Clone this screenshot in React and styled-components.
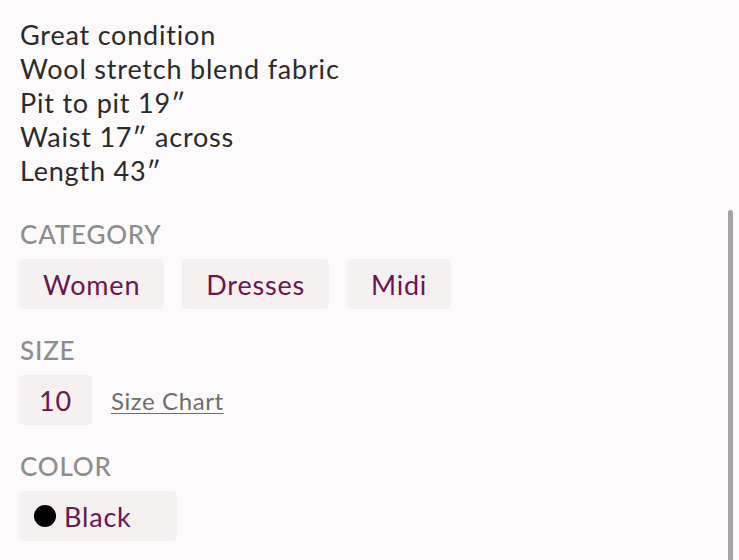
import React from 'react'
import styled, { createGlobalStyle } from 'styled-components';

const GlobalStyle = createGlobalStyle`
  html, body {
    margin: 0;
    padding: 0;
    background: #fcfafb;
  }
  body {
    font-family: Lato, "Noto Sans", sans-serif;
  }
`;

const details = [
  'Great condition',
  'Wool stretch blend fabric',
  'Pit to pit 19\u2033',
  'Waist 17\u2033 across',
  'Length 43\u2033',
];

const categories = ['Women', 'Dresses', 'Midi'];

const App = () => {
  return (
    <>
      <GlobalStyle />
      <StyledPage>
        <StyledDescription>
          {details.map((line) => <StyledLine key={line}>{line}</StyledLine>)}
        </StyledDescription>

        <StyledSection>
          <StyledLabel>Category</StyledLabel>
          <StyledChipRow>
            {categories.map((c) => <StyledChip key={c}>{c}</StyledChip>)}
          </StyledChipRow>
        </StyledSection>

        <StyledSection>
          <StyledLabel>Size</StyledLabel>
          <StyledChipRow>
            <StyledChip padLeft="20px" padRight="20px">10</StyledChip>
            <StyledLink href="#">Size Chart</StyledLink>
          </StyledChipRow>
        </StyledSection>

        <StyledSection>
          <StyledLabel>Color</StyledLabel>
          <StyledChipRow>
            <StyledChip padLeft="15px" padRight="45px">
              <StyledDot />
              Black
            </StyledChip>
          </StyledChipRow>
        </StyledSection>

        <StyledScrollThumb />
      </StyledPage>
    </>
  )
}

const StyledPage = styled.main`
  position: relative;
  height: 560px;
  overflow: hidden;
  padding: 18px 20px 0 20px;
  box-sizing: border-box;
`;

const StyledDescription = styled.div`
  color: #2b2a2a;
  font-size: 27px;
  line-height: 34px;
  letter-spacing: 0.8px;
  margin-bottom: 31px;
`;

const StyledLine = styled.div``;

const StyledSection = styled.section`
  & + & { margin-top: 26px; }
`;

const StyledLabel = styled.div`
  color: #8d8d8d;
  font-size: 26px;
  line-height: 30px;
  text-transform: uppercase;
  font-weight: 500;
  letter-spacing: 0.8px;
  margin-bottom: 10px;
`;

const StyledChipRow = styled.div`
  display: flex;
  align-items: center;
  gap: 19px;
`;

const StyledChip = styled.div`
  display: flex;
  align-items: center;
  gap: 8px;
  height: 50px;
  box-sizing: border-box;
  padding: 0 ${(props) => props.padRight || '24px'} 0 ${(props) => props.padLeft || '24px'};
  margin-left: -1px;
  background: #f4f1f0;
  border-radius: 5px;
  color: #6a1650;
  font-size: 27px;
  letter-spacing: 0.8px;
`;

const StyledDot = styled.span`
  width: 22px;
  height: 22px;
  border-radius: 50%;
  background: #000;
  flex-shrink: 0;
`;

const StyledLink = styled.a`
  color: #6d6d6d;
  font-size: 24px;
  letter-spacing: 0.6px;
  text-decoration: underline;
  text-underline-offset: 3px;
  text-decoration-thickness: 1px;
`;

const StyledScrollThumb = styled.div`
  position: absolute;
  right: 6px;
  top: 210px;
  bottom: 0;
  width: 5px;
  border-radius: 3px 3px 0 0;
  background: #a6a4a5;
`;

export default App
